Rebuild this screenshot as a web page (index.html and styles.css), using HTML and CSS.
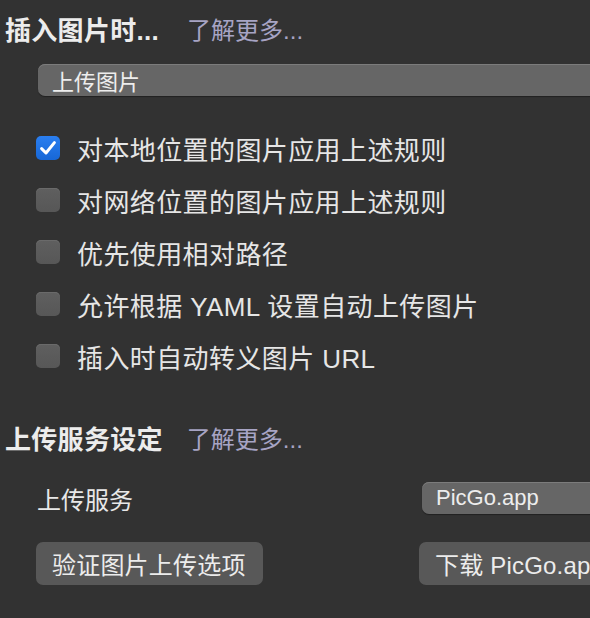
FILE: index.html
```html
<!DOCTYPE html>
<html lang="zh-CN">
<head>
<meta charset="utf-8">
<link rel="stylesheet" href="styles.css">
</head>
<body>
<div class="page">
  <div class="head">
    <span class="title">插入图片时...</span>
    <span class="link">了解更多...</span>
  </div>
  <div class="select wide"><span>上传图片</span></div>
  <ul class="checks">
    <li><span class="box on"><svg viewBox="0 0 24 24" width="24" height="24"><path d="M5.6 12.6 L10 17 L18.4 6.6" fill="none" stroke="#fff" stroke-width="3" stroke-linecap="round" stroke-linejoin="round"/></svg></span><span>对本地位置的图片应用上述规则</span></li>
    <li><span class="box"></span><span>对网络位置的图片应用上述规则</span></li>
    <li><span class="box"></span><span>优先使用相对路径</span></li>
    <li><span class="box"></span><span>允许根据 YAML 设置自动上传图片</span></li>
    <li><span class="box"></span><span>插入时自动转义图片 URL</span></li>
  </ul>
  <div class="head head2">
    <span class="title">上传服务设定</span>
    <span class="link">了解更多...</span>
  </div>
  <div class="grid">
    <div class="label">上传服务</div>
    <div class="select service"><span>PicGo.app</span></div>
    <div class="btn">验证图片上传选项</div>
    <div class="btn dl">下载 PicGo.app</div>
  </div>
</div>
</body>
</html>
```

FILE: styles.css
```css
html, body {
  margin: 0;
  padding: 0;
  overflow: hidden;
  background: #323232;
}
body {
  width: 590px;
  height: 618px;
  font-family: "Liberation Sans", "Noto Sans CJK SC", sans-serif;
  color: #e8e8e8;
}
.page {
  display: flex;
  flex-direction: column;
  padding-left: 5px;
}
.head {
  height: 56px;
  display: flex;
  align-items: center;
  gap: 28px;
  white-space: nowrap;
}
.title {
  font-size: 26px;
  font-weight: bold;
  color: #ececec;
  letter-spacing: 0.3px;
}
.link {
  font-size: 24px;
  color: #a7a4c4;
}
.select {
  height: 32px;
  border-radius: 7px;
  background: #666666;
  box-shadow: inset 0 1px 0 #7c7c7c, 0 1px 1px rgba(0,0,0,0.35);
  display: flex;
  align-items: center;
  padding-left: 14px;
  font-size: 22px;
  color: #ededed;
  white-space: nowrap;
}
.select.wide {
  margin-top: 8px;
  margin-left: 33px;
  width: 620px;
}
.checks {
  list-style: none;
  margin: 26px 0 0 0;
  padding: 0 0 0 31px;
  display: flex;
  flex-direction: column;
}
.checks li {
  height: 52px;
  display: flex;
  align-items: center;
  gap: 17px;
  font-size: 26px;
  letter-spacing: 0.4px;
  white-space: nowrap;
  color: #e6e6e6;
}
.box {
  width: 24px;
  height: 24px;
  border-radius: 5px;
  background: linear-gradient(#5f5f5f, #575757);
  box-shadow: inset 0 1px 0 #6a6a6a;
  flex: none;
  display: flex;
}
.box.on {
  background: linear-gradient(#2a7ef0, #1767d6);
  box-shadow: none;
}
.head2 {
  margin-top: 27px;
  gap: 24px;
}
.grid {
  margin-top: 17px;
  padding-left: 31px;
  display: grid;
  grid-template-columns: 383px 240px;
  grid-template-rows: 32px 43px;
  row-gap: 28px;
  align-items: center;
}
.label {
  font-size: 24px;
  padding-left: 1px;
  color: #e8e8e8;
}
.select.service {
  margin-left: 3px;
}
.btn {
  height: 43px;
  border-radius: 7px;
  background: #585858;
  display: flex;
  align-items: center;
  padding: 0 17px 0 16px;
  font-size: 24px;
  letter-spacing: 0.2px;
  color: #ececec;
  white-space: nowrap;
  justify-self: start;
}
.btn.dl {
  width: 240px;
}
```
